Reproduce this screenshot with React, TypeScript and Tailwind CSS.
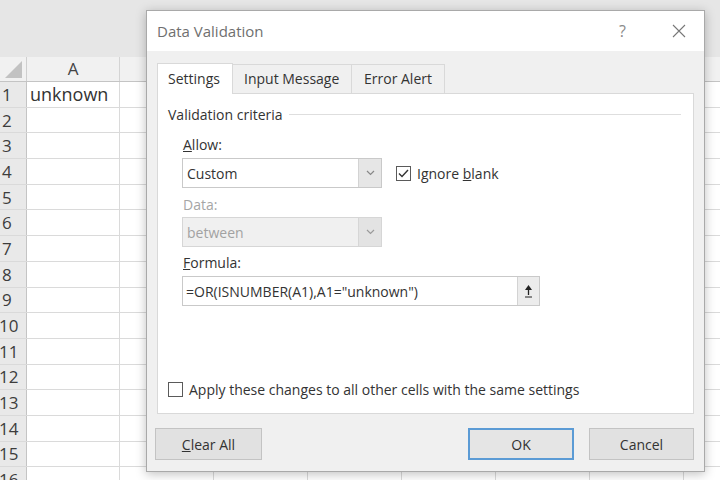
import React from "react";

const rows = Array.from({ length: 16 }, (_, i) => i + 1);
const cols = ["A", "B", "C", "D", "E", "F", "G", "H"];

function Chevron({ color = "#7a7a7a" }: { color?: string }) {
  return (
    <svg width="9" height="6" viewBox="0 0 9 6" fill="none">
      <path d="M1 1l3.5 3.5L8 1" stroke={color} strokeWidth="1.2" />
    </svg>
  );
}

function Checkbox({ checked }: { checked?: boolean }) {
  return (
    <div className="w-[15px] h-[15px] border border-[#5a5a5a] bg-white flex items-center justify-center shrink-0">
      {checked && (
        <svg width="11" height="9" viewBox="0 0 11 9" fill="none">
          <path d="M1 4.5l3 3L10 1" stroke="#333" strokeWidth="1.4" />
        </svg>
      )}
    </div>
  );
}

function Select({ value, disabled }: { value: string; disabled?: boolean }) {
  return (
    <div
      className={`w-[200px] h-[30px] flex border ${
        disabled ? "border-[#d6d6d6] bg-[#f0f0f0]" : "border-[#c9c9c9] bg-white"
      }`}
    >
      <div
        className={`flex-1 flex items-center pl-[4px] text-[14px] ${
          disabled ? "text-[#a2a2a2]" : "text-[#333]"
        }`}
      >
        {value}
      </div>
      <div
        className={`w-[23px] flex items-center justify-center border-l ${
          disabled ? "bg-[#e3e3e3] border-[#d6d6d6]" : "bg-[#e6e6e6] border-[#d3d3d3]"
        }`}
      >
        <Chevron color={disabled ? "#9a9a9a" : "#888"} />
      </div>
    </div>
  );
}

export default function App() {
  return (
    <div className="relative w-[720px] h-[480px] overflow-hidden bg-white font-['Open_Sans','Noto_Sans',sans-serif]">
      {/* spreadsheet behind */}
      <div className="h-[57px] bg-[#e6e6e6]" />
      <div className="flex h-[25px] w-[800px] bg-[#f1f1f1] border-b border-[#c4c4c4]">
        <div className="w-[27px] shrink-0 border-r border-[#cfcfcf] flex items-end justify-end pr-[4px] pb-[3px]">
          <svg width="17" height="17" viewBox="0 0 17 17">
            <path d="M17 0V17H0Z" fill="#c2c2c2" />
          </svg>
        </div>
        {cols.map((c, i) => (
          <div
            key={c}
            className={`${i === 0 ? "w-[93px]" : "w-[94px]"} shrink-0 border-r border-[#d4d4d4] flex items-center justify-center text-[17px] text-[#444]`}
          >
            {i === 0 ? c : ""}
          </div>
        ))}
      </div>
      {rows.map((r) => (
        <div key={r} className="flex h-[25.7px] w-[800px] border-b border-[#dadada]">
          <div className="w-[27px] shrink-0 bg-[#e9e9e9] border-r border-[#c4c4c4] flex items-center text-[17px] text-[#3d3d3d] leading-none">
            <span className={r >= 10 ? "-ml-[1px]" : "ml-[2px]"}>{r}</span>
          </div>
          {cols.map((c, i) => (
            <div
              key={c}
              className={`${i === 0 ? "w-[93px]" : "w-[94px]"} shrink-0 border-r border-[#dadada] flex items-center pl-[3px] text-[18px] text-[#333]`}
            >
              {r === 1 && i === 0 ? "unknown" : ""}
            </div>
          ))}
        </div>
      ))}

      {/* dialog */}
      <div className="absolute left-[146px] top-[10px] w-[559px] h-[462px] flex flex-col bg-[#f0f0f0] border border-[#a9a9a9] shadow-[0_2px_10px_rgba(0,0,0,0.25)]">
        <div className="h-[40px] bg-white flex items-center pl-[10px] pr-[18px]">
          <span className="text-[15px] text-[#6f6f6f]">Data Validation</span>
          <span className="ml-auto mr-[46px] text-[16px] text-[#8a8a8a]">?</span>
          <svg width="14" height="14" viewBox="0 0 14 14">
            <path d="M1 1l12 12M13 1L1 13" stroke="#777" strokeWidth="1.1" />
          </svg>
        </div>

        <div className="flex-1 flex flex-col px-[10px] pt-[11px]">
          <div className="flex items-end h-[31px] text-[14px] text-[#333]">
            <div className="w-[76px] h-[31px] bg-white border border-b-0 border-[#d9d9d9] flex items-center pl-[10px] pb-[2px] relative z-10 -mb-px">
              Settings
            </div>
            <div className="w-[119px] h-[29px] border-t border-r border-[#d9d9d9] flex items-center pl-[11px] pb-[2px]">
              Input Message
            </div>
            <div className="w-[93px] h-[29px] border-t border-r border-[#d9d9d9] flex items-center pl-[12px] pb-[2px]">
              Error Alert
            </div>
          </div>

          <div className="w-[537px] h-[321px] bg-white border border-[#d9d9d9] flex flex-col pt-[11px] pb-[15px] text-[14px] text-[#333]">
            <div className="flex items-center h-[18px] pl-[10px] pr-[12px]">
              <span className="mr-[6px]">Validation criteria</span>
              <div className="flex-1 h-px bg-[#dedede]" />
            </div>

            <div className="pl-[25px] mt-[12px] h-[18px] flex items-center">
              <span>
                <span className="underline">A</span>llow:
              </span>
            </div>
            <div className="pl-[24px] mt-[5px] flex items-center">
              <Select value="Custom" />
              <div className="ml-[14px] flex items-center gap-[6px]">
                <Checkbox checked />
                <span>
                  Ignore <span className="underline">b</span>lank
                </span>
              </div>
            </div>

            <div className="pl-[25px] mt-[7px] h-[18px] flex items-center text-[#a5a5a5]">Data:</div>
            <div className="pl-[24px] mt-[4px]">
              <Select value="between" disabled />
            </div>

            <div className="pl-[25px] mt-[6px] h-[18px] flex items-center">
              <span>
                <span className="underline">F</span>ormula:
              </span>
            </div>
            <div className="pl-[24px] mt-[5px]">
              <div className="w-[358px] h-[30px] border border-[#c9c9c9] flex">
                <div className="flex-1 flex items-center pl-[3px] text-[14px] text-[#333]">
                  =OR(ISNUMBER(A1),A1="unknown")
                </div>
                <div className="w-[22px] bg-[#ececec] border-l border-[#d3d3d3] flex items-center justify-center">
                  <svg width="9" height="14" viewBox="0 0 9 14">
                    <path d="M4.5 1L8 6H1Z" fill="#222" />
                    <path d="M4.5 5v6" stroke="#222" strokeWidth="1.3" />
                    <path d="M1 13h7" stroke="#222" strokeWidth="1" />
                  </svg>
                </div>
              </div>
            </div>

            <div className="mt-auto pl-[10px] flex items-center gap-[6px] h-[18px]">
              <Checkbox />
              <span>Apply these changes to all other cells with the same settings</span>
            </div>
          </div>

          <div className="flex items-center mt-[14px] text-[14px] text-[#333]">
            <div className="-ml-[2px] w-[107px] h-[32px] bg-[#e1e1e1] border border-[#c3c3c3] flex items-center justify-center">
              <span>
                <span className="underline">C</span>lear All
              </span>
            </div>
            <div className="ml-auto w-[106px] h-[32px] bg-[#e5e5e5] border-2 border-[#5b9bd5] flex items-center justify-center">
              OK
            </div>
            <div className="ml-[15px] w-[105px] h-[32px] bg-[#e1e1e1] border border-[#c3c3c3] flex items-center justify-center">
              Cancel
            </div>
          </div>
        </div>
      </div>
    </div>
  );
}
